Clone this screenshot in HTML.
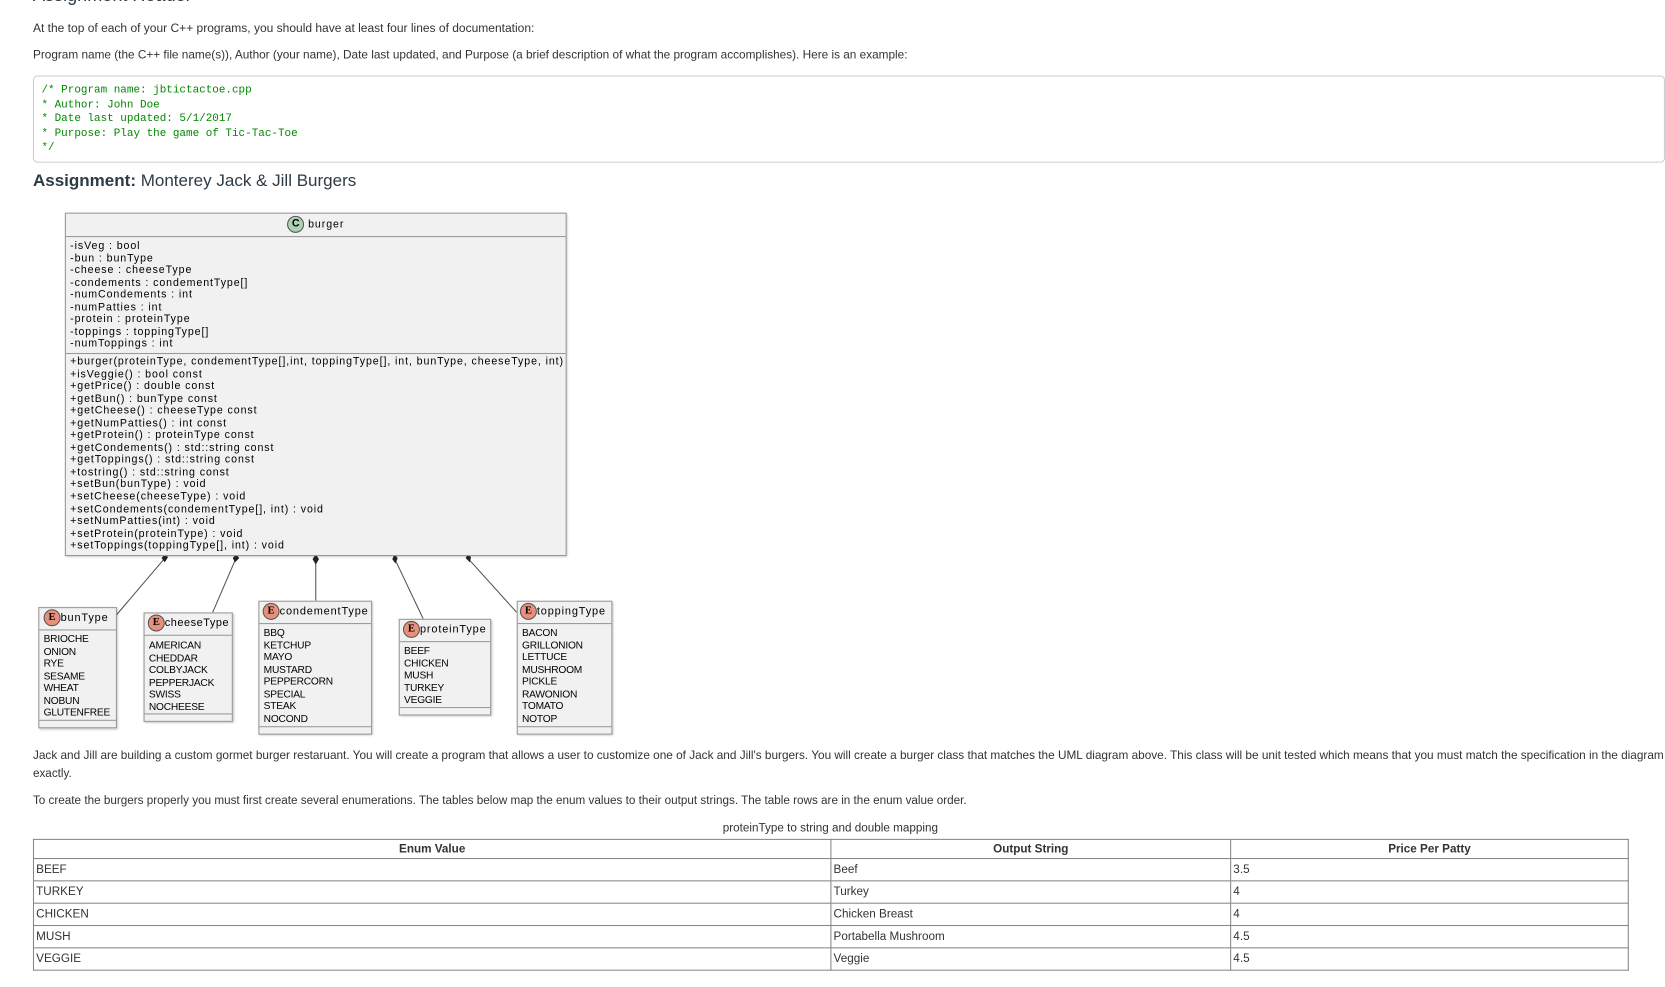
<!DOCTYPE html>
<html><head><meta charset="utf-8">
<style>
html,body{margin:0;padding:0;background:#fff;}
body{width:1665px;height:986px;overflow:hidden;position:relative;}
#w{position:absolute;left:0;top:0;width:1566px;height:928px;transform:scale(1.0632);transform-origin:0 0;font-family:"Liberation Sans",sans-serif;color:#2d3b45;}
.a{position:absolute;white-space:nowrap;}
.p{font-size:11px;color:#333;}
.code{position:absolute;left:31px;top:71px;width:1533px;height:80px;border:1px solid #c7cdd1;border-radius:4px;background:#fff;}
.code div{position:absolute;left:7px;font-family:"Liberation Mono",monospace;font-size:10.3px;color:#080;}
.box{position:absolute;background:#f1f1f1;border:1px solid #999;box-shadow:1px 1px 2px rgba(0,0,0,.25);}
.uml{font-size:10px;color:#000;letter-spacing:0.85px;line-height:11.55px;}
.uml .a{letter-spacing:0.85px;}
.hdr{position:absolute;left:0;right:0;top:0;border-bottom:1px solid #999;white-space:nowrap;overflow:hidden;}
.eh{font-size:10.3px;color:#000;letter-spacing:0.8px;}
.ic{display:inline-block;width:14px;height:14px;border-radius:50%;border:1px solid #555;text-align:center;line-height:14px;font-family:"Liberation Serif",serif;font-weight:bold;font-size:10px;vertical-align:middle;letter-spacing:0;}
.E{background:#E8907C;}
.C{background:#ADD1B2;font-family:"Liberation Sans",sans-serif;}
.en{font-size:9.6px;color:#000;line-height:11.5px;}
.en .a{letter-spacing:-0.2px;}
table{position:absolute;left:31px;top:789px;width:1501px;border-collapse:collapse;font-size:11px;color:#333;table-layout:fixed;}
td,th{border:1px solid #888;padding:0 2px;height:20px;text-align:left;font-weight:normal;}
th{text-align:center;font-weight:bold;height:17px;}
</style></head><body><div id="w">
<div class="a" style="left:31px;top:-14px;font-size:17px;color:#2d3b45">Assignment Header</div>
<div class="a p" style="left:31px;top:21px;font-size:11.3px">At the top of each of your C++ programs, you should have at least four lines of documentation:</div>
<div class="a p" style="left:31px;top:46px;font-size:11.1px">Program name (the C++ file name(s)), Author (your name), Date last updated, and Purpose (a brief description of what the program accomplishes). Here is an example:</div>
<div class="code">
<div style="top:7px">/* Program name: jbtictactoe.cpp</div>
<div style="top:20.5px">* Author: John Doe</div>
<div style="top:34px">* Date last updated: 5/1/2017</div>
<div style="top:47.5px">* Purpose: Play the game of Tic-Tac-Toe</div>
<div style="top:61px">*/</div>
</div>
<div class="a" style="left:31px;top:162px;font-size:16px;color:#2d3b45"><b>Assignment:</b> Monterey Jack &amp; Jill Burgers</div>

<svg class="a" style="left:0;top:0" width="700" height="700">
<g stroke="#555" stroke-width="1" fill="none">
<line x1="155" y1="525" x2="109" y2="579"/>
<line x1="222" y1="525" x2="200" y2="576"/>
<line x1="297" y1="525" x2="297" y2="565"/>
<line x1="371" y1="525" x2="398" y2="582"/>
<line x1="440" y1="525" x2="486" y2="576"/>
</g>
<g fill="#222">
<polygon points="155,521 158,524 155,529 152,525"/>
<polygon points="222,521 225,525 221,529 219,525"/>
<polygon points="297,521 300,526 297,531 294,526"/>
<polygon points="371,521 374,525 372,530 369,526"/>
<polygon points="440,521 443,524 442,529 438,525"/>
</g>
</svg>

<div class="box uml" style="left:61px;top:200px;width:470px;height:321px">
<div class="hdr" style="height:21px;text-align:center;line-height:21px"><span class="ic C">C</span> burger</div>
<div class="a" style="left:4px;top:25px">-isVeg : bool<br>-bun : bunType<br>-cheese : cheeseType<br>-condements : condementType[]<br>-numCondements : int<br>-numPatties : int<br>-protein : proteinType<br>-toppings : toppingType[]<br>-numToppings : int</div>
<div class="a" style="left:0;right:0;top:131px;border-top:1px solid #999"></div>
<div class="a" style="left:4px;top:134px">+burger(proteinType, condementType[],int, toppingType[], int, bunType, cheeseType, int)<br>+isVeggie() : bool const<br>+getPrice() : double const<br>+getBun() : bunType const<br>+getCheese() : cheeseType const<br>+getNumPatties() : int const<br>+getProtein() : proteinType const<br>+getCondements() : std::string const<br>+getToppings() : std::string const<br>+tostring() : std::string const<br>+setBun(bunType) : void<br>+setCheese(cheeseType) : void<br>+setCondements(condementType[], int) : void<br>+setNumPatties(int) : void<br>+setProtein(proteinType) : void<br>+setToppings(toppingType[], int) : void</div>
</div>

<div class="box en" style="left:36px;top:571px;width:72px;height:112px">
<div class="hdr eh" style="height:20px;line-height:20px;padding-left:4px"><span class="ic E">E</span>bunType</div>
<div class="a" style="left:4px;top:24px">BRIOCHE<br>ONION<br>RYE<br>SESAME<br>WHEAT<br>NOBUN<br>GLUTENFREE</div>
<div class="a" style="left:0;right:0;top:105px;border-top:1px solid #999"></div>
</div>
<div class="box en" style="left:135px;top:576px;width:82px;height:101px">
<div class="hdr eh" style="height:20px;line-height:20px;padding-left:3px;letter-spacing:0.5px"><span class="ic E">E</span>cheeseType</div>
<div class="a" style="left:4px;top:25px">AMERICAN<br>CHEDDAR<br>COLBYJACK<br>PEPPERJACK<br>SWISS<br>NOCHEESE</div>
<div class="a" style="left:0;right:0;top:94px;border-top:1px solid #999"></div>
</div>
<div class="box en" style="left:243px;top:565px;width:105px;height:124px">
<div class="hdr eh" style="height:20px;line-height:20px;padding-left:3px"><span class="ic E">E</span>condementType</div>
<div class="a" style="left:4px;top:24px">BBQ<br>KETCHUP<br>MAYO<br>MUSTARD<br>PEPPERCORN<br>SPECIAL<br>STEAK<br>NOCOND</div>
<div class="a" style="left:0;right:0;top:117px;border-top:1px solid #999"></div>
</div>
<div class="box en" style="left:375px;top:582px;width:85px;height:89px">
<div class="hdr eh" style="height:20px;line-height:20px;padding-left:3px"><span class="ic E">E</span>proteinType</div>
<div class="a" style="left:4px;top:24px">BEEF<br>CHICKEN<br>MUSH<br>TURKEY<br>VEGGIE</div>
<div class="a" style="left:0;right:0;top:82px;border-top:1px solid #999"></div>
</div>
<div class="box en" style="left:486px;top:565px;width:88px;height:124px">
<div class="hdr eh" style="height:20px;line-height:20px;padding-left:2px"><span class="ic E">E</span>toppingType</div>
<div class="a" style="left:4px;top:24px">BACON<br>GRILLONION<br>LETTUCE<br>MUSHROOM<br>PICKLE<br>RAWONION<br>TOMATO<br>NOTOP</div>
<div class="a" style="left:0;right:0;top:117px;border-top:1px solid #999"></div>
</div>

<div class="a p" style="left:31px;top:705px;font-size:11.1px">Jack and Jill are building a custom gormet burger restaruant. You will create a program that allows a user to customize one of Jack and Jill's burgers. You will create a burger class that matches the UML diagram above. This class will be unit tested which means that you must match the specification in the diagram</div>
<div class="a p" style="left:31px;top:722px">exactly.</div>
<div class="a p" style="left:31px;top:747px">To create the burgers properly you must first create several enumerations. The tables below map the enum values to their output strings. The table rows are in the enum value order.</div>
<div class="a p" style="left:0;width:1562px;text-align:center;top:773px">proteinType to string and double mapping</div>
<table>
<colgroup><col style="width:750px"><col style="width:376px"><col></colgroup>
<tr><th>Enum Value</th><th>Output String</th><th>Price Per Patty</th></tr>
<tr><td>BEEF</td><td>Beef</td><td>3.5</td></tr>
<tr><td>TURKEY</td><td>Turkey</td><td>4</td></tr>
<tr><td>CHICKEN</td><td>Chicken Breast</td><td>4</td></tr>
<tr><td>MUSH</td><td>Portabella Mushroom</td><td>4.5</td></tr>
<tr><td>VEGGIE</td><td>Veggie</td><td>4.5</td></tr>
</table>
</div></body></html>
